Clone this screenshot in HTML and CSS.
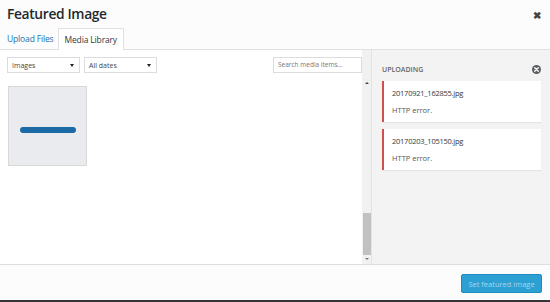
FILE: index.html
```html
<!DOCTYPE html>
<html>
<head>
<meta charset="utf-8">
<link rel="stylesheet" href="styles.css">
</head>
<body>
<div class="modal">
  <header class="head">
    <div class="title-row">
      <h1 class="title">Featured Image</h1>
      <span class="close">&#10006;</span>
    </div>
    <nav class="tabs">
      <a class="tab link">Upload Files</a>
      <a class="tab active">Media Library</a>
    </nav>
  </header>
  <main class="main">
    <section class="browser">
      <div class="content">
        <div class="toolbar">
          <div class="filters">
            <div class="select sel-images"><span>Images</span><span class="caret"></span></div>
            <div class="select sel-dates"><span>All dates</span><span class="caret"></span></div>
          </div>
          <div class="search">Search media items...</div>
        </div>
        <div class="grid">
          <div class="thumb"><div class="bar"></div></div>
        </div>
      </div>
      <div class="scrollbar">
        <span class="arrow up"></span>
        <div class="track"><div class="thumbbar"></div></div>
        <span class="arrow down"></span>
      </div>
    </section>
    <aside class="sidebar">
      <div class="side-head">
        <span class="side-label">UPLOADING</span>
        <span class="dismiss">
          <svg width="9" height="9" viewBox="0 0 10 10"><circle cx="5" cy="5" r="5" fill="#5b5e63"/><path d="M3 3 L7 7 M7 3 L3 7" stroke="#f3f3f3" stroke-width="1.6" stroke-linecap="round"/></svg>
        </span>
      </div>
      <div class="error">
        <div class="fname">20170921_162855.jpg</div>
        <div class="msg">HTTP error.</div>
      </div>
      <div class="error">
        <div class="fname">20170203_105150.jpg</div>
        <div class="msg">HTTP error.</div>
      </div>
    </aside>
  </main>
  <footer class="foot">
    <button class="primary">Set featured image</button>
  </footer>
  <div class="edge"></div>
</div>
</body>
</html>
```
FILE: styles.css
```css
* { box-sizing: border-box; }
html, body { margin: 0; padding: 0; }
body {
  width: 550px;
  height: 302px;
  overflow: hidden;
  font-family: "Open Sans", "Noto Sans", sans-serif;
  color: #32373c;
  background: #fff;
}
.modal {
  display: flex;
  flex-direction: column;
  height: 302px;
}
.head {
  background: #fcfcfc;
  border-bottom: 1px solid #e1e1e1;
  height: 50px;
  display: flex;
  flex-direction: column;
}
.title-row {
  display: flex;
  align-items: center;
  justify-content: space-between;
  height: 28px;
  padding: 0 9px 0 7px;
}
.title {
  margin: 0;
  font-size: 13.8px;
  font-weight: 600;
  color: #23282d;
  letter-spacing: -0.35px;
  line-height: 28px;
}
.close {
  font-size: 10px;
  color: #444;
  font-weight: bold;
  line-height: 1;
  margin-top: 2px;
}
.tabs {
  display: flex;
  align-items: stretch;
  height: 22px;
  padding-left: 1px;
}
.tab {
  font-size: 8.5px;
  line-height: 21px;
  padding: 0 6px;
  text-decoration: none;
  letter-spacing: -0.15px;
  white-space: nowrap;
}
.tab.link { color: #2271a8; padding-right: 4px; }
.tab.active {
  color: #32373c;
  background: #fff;
  border: 1px solid #e1e1e1;
  border-bottom: none;
  margin-bottom: -1px;
  height: 23px;
  padding: 0 6px;
}
.main {
  display: flex;
  height: 214px;
}
.browser {
  width: 371px;
  display: flex;
  background: #fff;
}
.content {
  flex: 1;
  display: flex;
  flex-direction: column;
}
.toolbar {
  display: flex;
  justify-content: space-between;
  padding: 7px 0 0 7px;
  height: 36px;
}
.filters { display: flex; gap: 4px; }
.select {
  height: 16px;
  border: 1px solid #dcdcdc;
  background: #fff;
  display: flex;
  justify-content: space-between;
  align-items: center;
  padding: 0 5px 0 4px;
  font-size: 7px;
  color: #444;
}
.sel-images { width: 73px; }
.sel-dates { width: 73px; }
.caret {
  width: 0;
  height: 0;
  border-left: 2px solid transparent;
  border-right: 2px solid transparent;
  border-top: 3px solid #222;
}
.search {
  width: 89px;
  height: 16px;
  border: 1px solid #dcdcdc;
  font-size: 6.5px;
  color: #777;
  padding: 0 4px;
  line-height: 14px;
  white-space: nowrap;
}
.grid {
  padding: 0 0 0 8px;
}
.thumb {
  width: 79px;
  height: 80px;
  background: #eaebee;
  border: 1px solid #d8d8d8;
  display: flex;
  align-items: center;
  justify-content: center;
}
.bar {
  width: 56px;
  height: 6px;
  border-radius: 3px;
  background: #1c6aa6;
  margin-top: 8px;
}
.scrollbar {
  width: 9px;
  background: #f1f1f1;
  display: flex;
  flex-direction: column;
  align-items: center;
  padding-top: 32px;
}
.arrow {
  width: 0;
  height: 0;
  border-left: 2px solid transparent;
  border-right: 2px solid transparent;
}
.arrow.up { border-bottom: 2px solid #444; margin-bottom: 4px; }
.arrow.down { border-top: 2px solid #777; margin: 3px 0 4px; }
.track {
  flex: 1;
  width: 8px;
  display: flex;
  flex-direction: column;
  justify-content: flex-end;
}
.thumbbar {
  height: 42px;
  background: #c1c1c1;
}
.sidebar {
  flex: 1;
  background: #f3f3f3;
  border-left: 1px solid #e4e4e4;
  padding: 13px 9px 0 10px;
}
.side-head {
  display: flex;
  justify-content: space-between;
  align-items: center;
  height: 13px;
  margin-bottom: 5px;
}
.side-label {
  font-size: 7px;
  font-weight: 600;
  color: #666;
}
.dismiss { display: flex; }
.error {
  background: #fff;
  border-left: 2px solid #d54e4e;
  box-shadow: 0 1px 1px rgba(0,0,0,0.06);
  height: 41px;
  padding: 6px 0 0 8px;
  margin-bottom: 7px;
}
.fname {
  font-size: 7.5px;
  color: #32373c;
  line-height: 12px;
  letter-spacing: -0.25px;
}
.msg {
  font-size: 7.5px;
  color: #555;
  line-height: 12px;
  margin-top: 5px;
}
.foot {
  height: 36px;
  background: #fcfcfc;
  border-top: 1px solid #dedede;
  display: flex;
  justify-content: flex-end;
  align-items: center;
  padding-right: 8px;
}
.primary {
  width: 81px;
  height: 19px;
  background: #2c9fd3;
  border: 1px solid #1d8cc0;
  border-radius: 2px;
  color: #a7d8ef;
  font-family: "Open Sans", sans-serif;
  font-size: 7.5px;
  padding: 0;
  margin-top: 2px;
}
.edge {
  height: 2px;
  background: #333538;
}
```
